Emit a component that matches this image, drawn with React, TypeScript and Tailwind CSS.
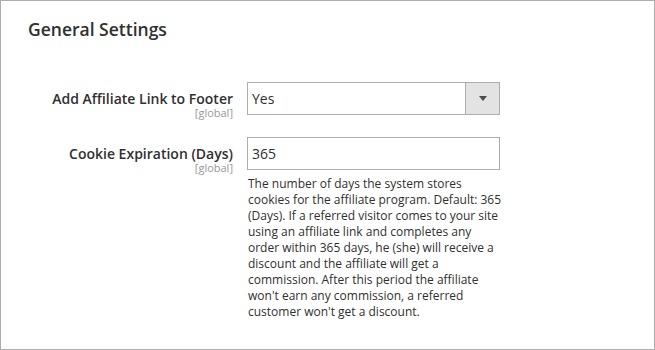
const font = { fontFamily: '"Open Sans", "Liberation Sans", sans-serif' };

function FieldLabel({ text }: { text: string }) {
  return (
    <div className="flex w-[232px] flex-col items-end">
      <span className="text-[14px] font-semibold leading-[17px] text-[#303030]">
        {text}
      </span>
      <span className="text-[11px] leading-[11px] text-[#999999]">[global]</span>
    </div>
  );
}

export default function App() {
  return (
    <div
      className="h-[350px] w-[655px] border border-[#adadad] bg-white"
      style={font}
    >
      <h2 className="pl-[27px] pt-[16px] text-[17.5px] font-semibold leading-[24px] text-[#303030]">
        General Settings
      </h2>

      <div className="mt-[41px] flex flex-col gap-[19px]">
        {/* Add Affiliate Link to Footer */}
        <div className="flex items-start gap-[14px]">
          <div className="pt-[8px]">
            <FieldLabel text="Add Affiliate Link to Footer" />
          </div>
          <div className="flex h-[33px] w-[253px] border border-[#adadad]">
            <div className="flex flex-1 items-center pl-[4px] text-[14px] text-[#303030]">
              Yes
            </div>
            <div className="flex w-[34px] items-center justify-center border-l border-[#adadad] bg-[#e3e3e3]">
              <svg width="8" height="5" viewBox="0 0 8 5">
                <path d="M0 0h8L4 5z" fill="#514943" />
              </svg>
            </div>
          </div>
        </div>

        {/* Cookie Expiration */}
        <div className="flex items-start gap-[14px]">
          <div className="pt-[8px]">
            <FieldLabel text="Cookie Expiration (Days)" />
          </div>
          <div className="w-[253px]">
            <div className="flex h-[33px] items-center border border-[#adadad] pl-[4px] text-[14px] text-[#303030]">
              365
            </div>
            <p className="mt-[6px] w-[258px] pl-[1px] text-[12px] leading-[16px] text-[#303030]">
              The number of days the system stores cookies for the affiliate
              program. Default: 365 (Days). If a referred visitor comes to your
              site using an affiliate link and completes any order within 365
              days, he (she) will receive a discount and the affiliate will get
              a commission. After this period the affiliate won't earn any
              commission, a referred customer won't get a discount.
            </p>
          </div>
        </div>
      </div>
    </div>
  );
}
